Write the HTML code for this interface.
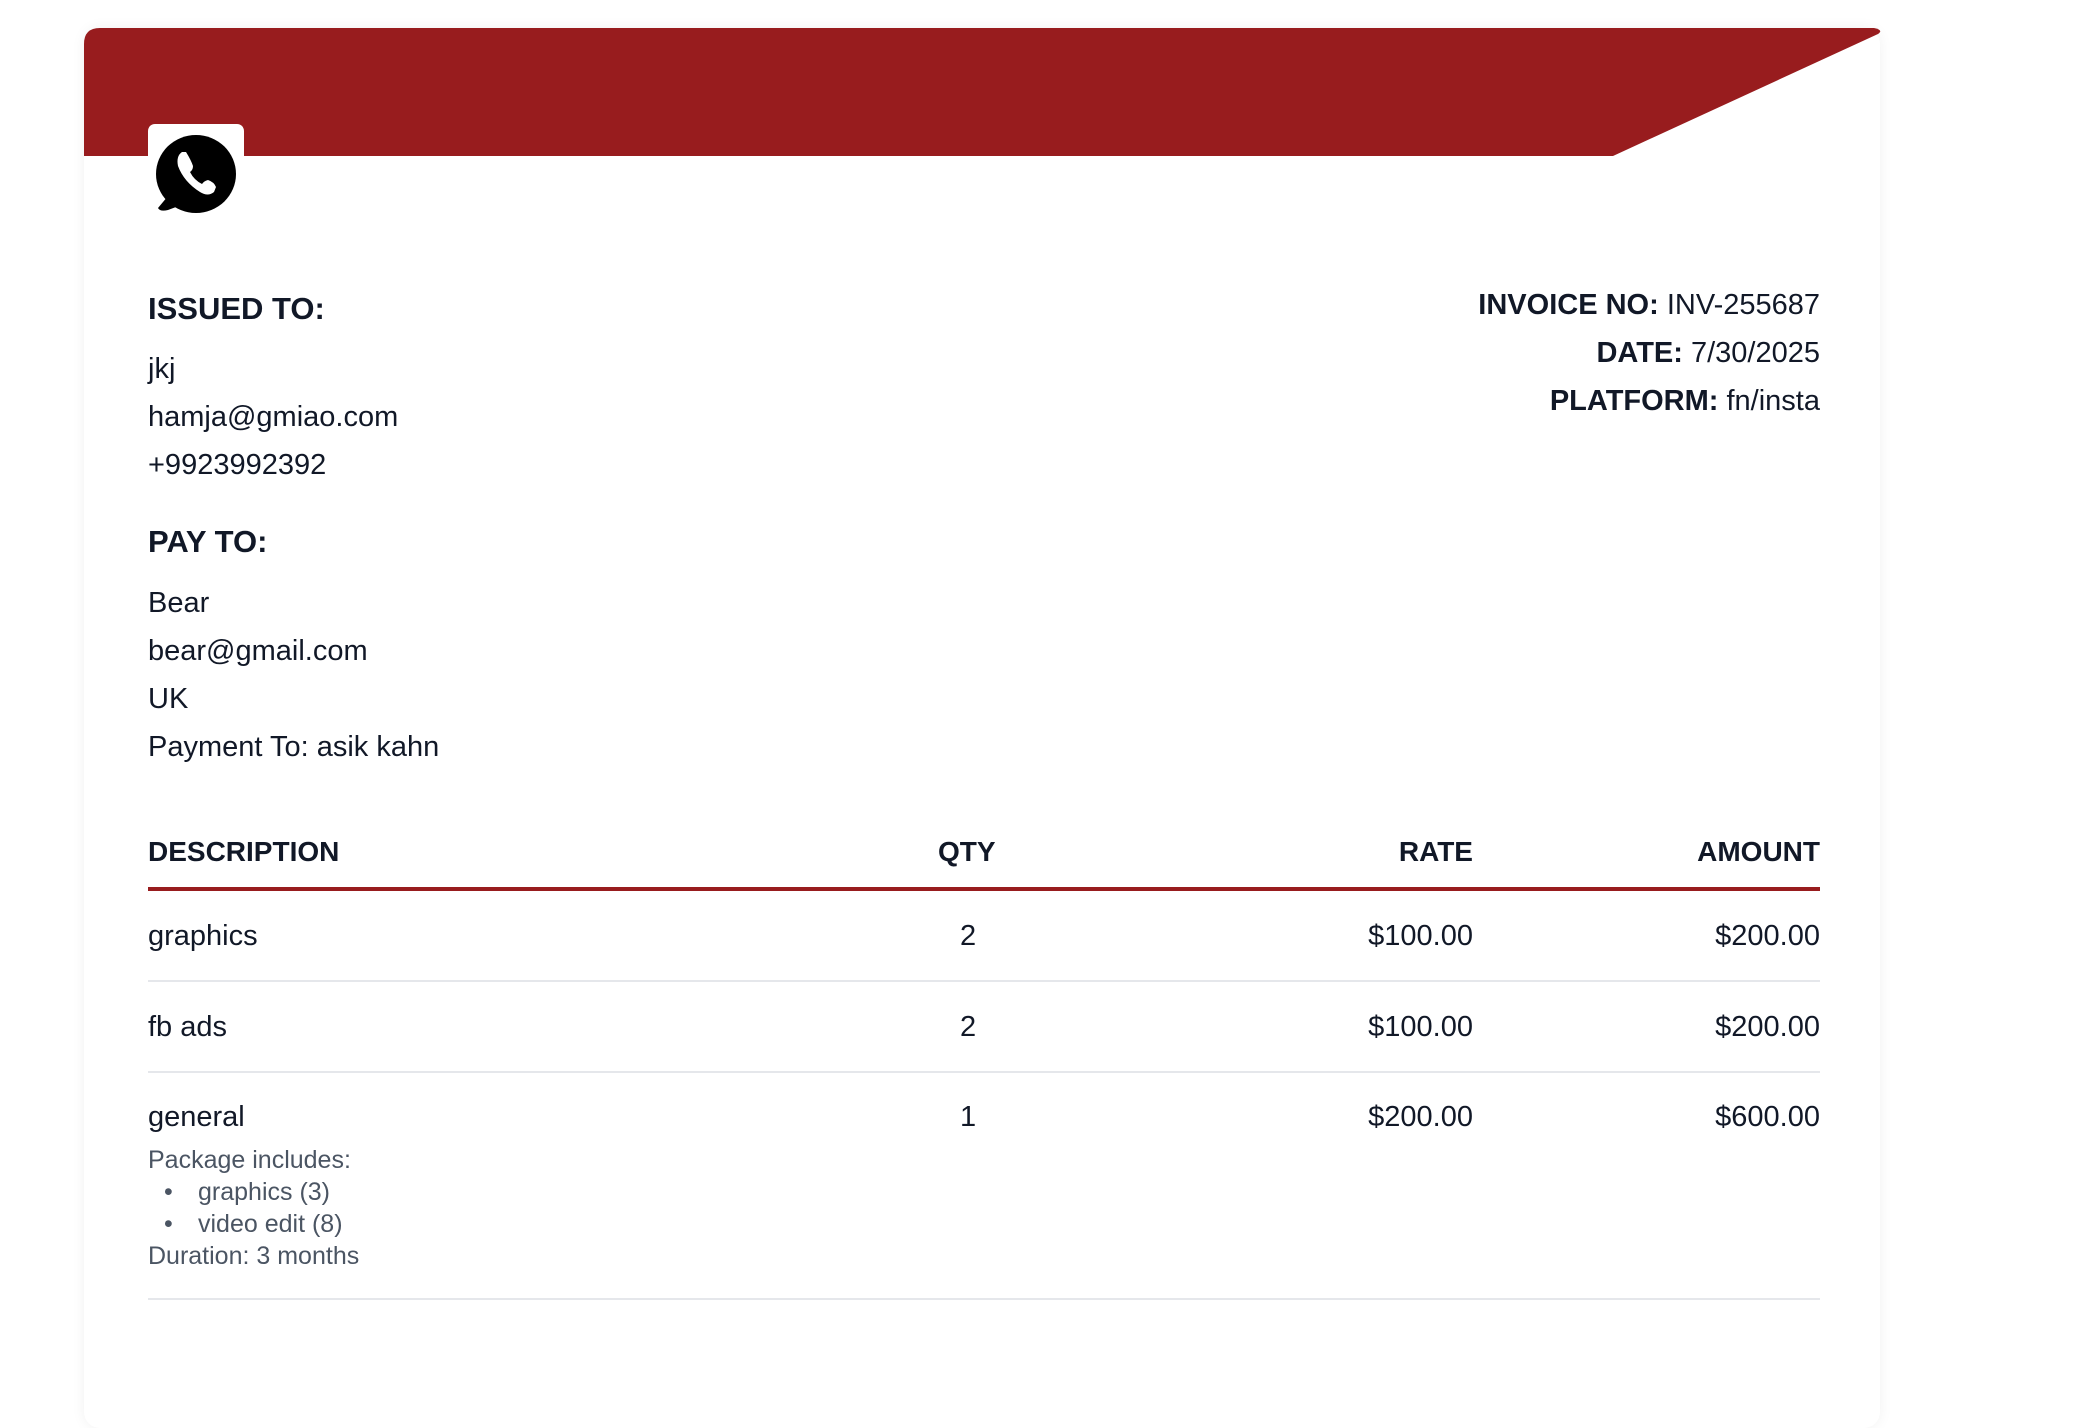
<!DOCTYPE html>
<html><head><meta charset="utf-8"><style>
html,body{margin:0;padding:0;background:#fff;width:2080px;height:1368px;overflow:hidden;font-family:"Liberation Sans",sans-serif;color:#111827}
.card{position:absolute;left:84px;top:28px;width:1796px;height:1400px;background:#fff;border-radius:16px;box-shadow:0 0 14px rgba(0,0,0,0.06)}
.t{position:absolute;white-space:nowrap;line-height:1;font-size:29px}
.h{font-weight:bold;font-size:31px}
.r{text-align:right}
.b{font-weight:bold}
.s{font-size:25px;color:#4b5563}
.line{position:absolute;left:148px;width:1672px;height:2px;background:#e5e7eb}
</style></head><body>
<div class="card"></div>
<svg style="position:absolute;left:0;top:0" width="2080" height="220">
<path d="M84 44 Q84 28 100 28 L1874 28 Q1884 30 1878 34 L1613 156 L84 156 Z" fill="#981c1e"/>
<rect x="148" y="124" width="96" height="90" rx="7" fill="#fff"/>
<ellipse cx="196" cy="174" rx="40" ry="39" fill="#000"/>
<path d="M168 196 L158 208 Q160 212 168 210 L184 204 Z" fill="#000"/>
<path d="M182 152 Q176 156 178 166 Q184 182 200 192 Q208 197 214 192 L216 187 Q214 182 208 180 Q204 181 202 184 Q194 180 190 172 Q193 170 193 166 Q191 160 186 152 Z" fill="#fff"/>
</svg>
<div class="t h" style="left:148px;top:293px">ISSUED TO:</div>
<div class="t" style="left:148px;top:355px">jkj</div>
<div class="t" style="left:148px;top:403px">hamja@gmiao.com</div>
<div class="t" style="left:148px;top:451px">+9923992392</div>
<div class="t h" style="left:148px;top:526px">PAY TO:</div>
<div class="t" style="left:148px;top:589px">Bear</div>
<div class="t" style="left:148px;top:637px">bear@gmail.com</div>
<div class="t" style="left:148px;top:685px">UK</div>
<div class="t" style="left:148px;top:733px">Payment To: asik kahn</div>
<div class="t r" style="right:260px;top:291px"><span class="b">INVOICE NO:</span> INV-255687</div>
<div class="t r" style="right:260px;top:339px"><span class="b">DATE:</span> 7/30/2025</div>
<div class="t r" style="right:260px;top:387px"><span class="b">PLATFORM:</span> fn/insta</div>
<div class="t b" style="left:148px;top:838px;font-size:28px">DESCRIPTION</div>
<div class="t b" style="left:938px;top:838px;font-size:28px">QTY</div>
<div class="t b r" style="right:607px;top:838px;font-size:28px">RATE</div>
<div class="t b r" style="right:260px;top:838px;font-size:28px">AMOUNT</div>
<div class="line" style="top:887px;height:4px;background:#981c1e"></div>
<div class="t" style="left:148px;top:922px">graphics</div>
<div class="t" style="left:960px;top:922px">2</div>
<div class="t r" style="right:607px;top:922px">$100.00</div>
<div class="t r" style="right:260px;top:922px">$200.00</div>
<div class="line" style="top:980px"></div>
<div class="t" style="left:148px;top:1013px">fb ads</div>
<div class="t" style="left:960px;top:1013px">2</div>
<div class="t r" style="right:607px;top:1013px">$100.00</div>
<div class="t r" style="right:260px;top:1013px">$200.00</div>
<div class="line" style="top:1071px"></div>
<div class="t" style="left:148px;top:1103px">general</div>
<div class="t" style="left:960px;top:1103px">1</div>
<div class="t r" style="right:607px;top:1103px">$200.00</div>
<div class="t r" style="right:260px;top:1103px">$600.00</div>
<div class="t s" style="left:148px;top:1148px">Package includes:</div>
<div class="t s" style="left:164px;top:1180px">•</div>
<div class="t s" style="left:198px;top:1180px">graphics (3)</div>
<div class="t s" style="left:164px;top:1212px">•</div>
<div class="t s" style="left:198px;top:1212px">video edit (8)</div>
<div class="t s" style="left:148px;top:1244px">Duration: 3 months</div>
<div class="line" style="top:1298px"></div>
</body></html>
